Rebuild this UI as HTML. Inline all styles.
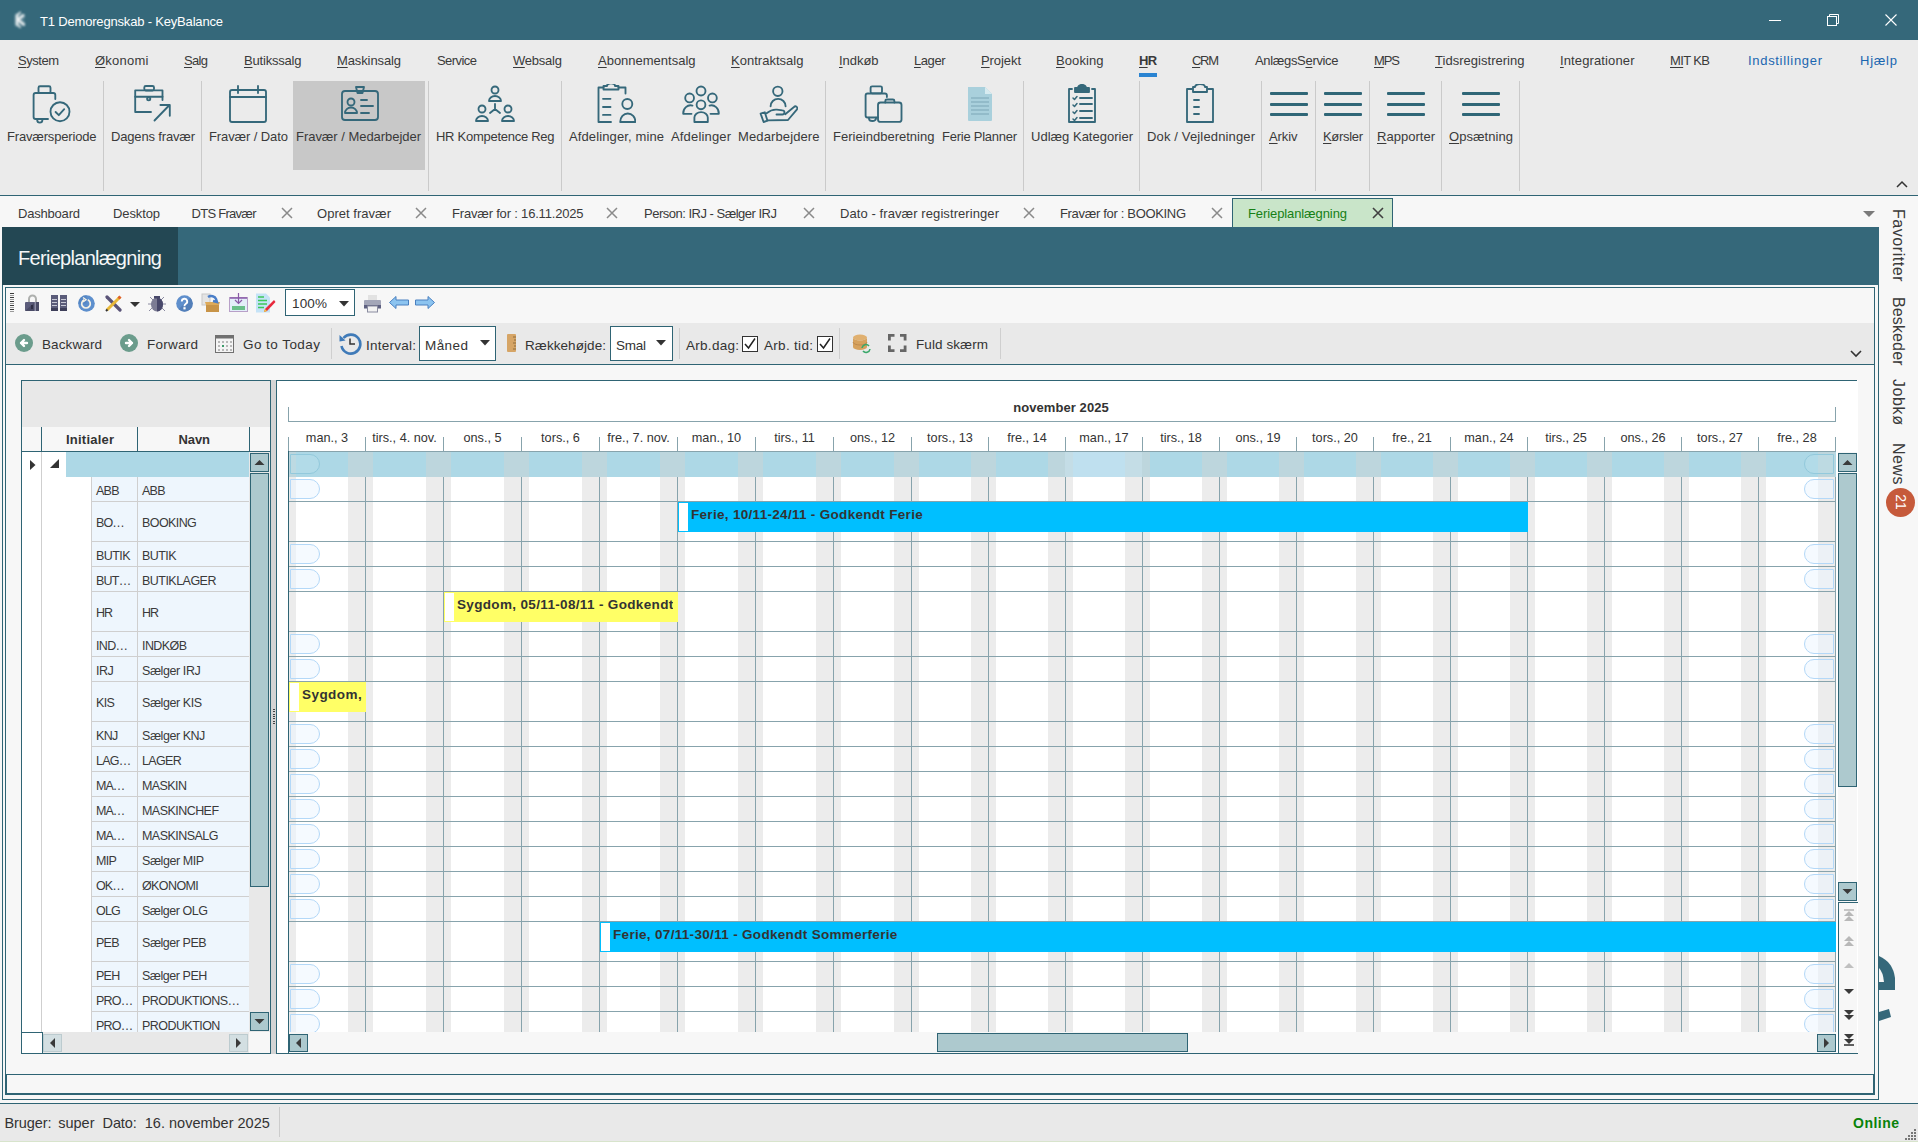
<!DOCTYPE html><html><head><meta charset="utf-8"><style>
html,body{margin:0;padding:0}
body{width:1918px;height:1142px;position:relative;overflow:hidden;background:#f7f7f7;font-family:"Liberation Sans",sans-serif;}
.a{position:absolute}
.t{white-space:nowrap}
u{text-decoration:underline;text-underline-offset:1.5px;text-decoration-thickness:1px}
</style></head><body>
<div class="a" style="left:0px;top:0px;width:1918px;height:40px;background:#35687a;"></div>
<svg class="a" style="left:8px;top:6px;filter:blur(0.8px);" width="24" height="28" viewBox="0 0 24 28"><g fill="none" stroke="#cfdde2" stroke-width="6" opacity="0.25" stroke-linecap="round"><path d="M9.5 10 V18 M10 13.8 L14 11 M10 13.8 L14 17"/></g><g fill="none" stroke="#e9eef0" stroke-width="2.6" stroke-linecap="round" stroke-linejoin="round"><path d="M9 9.5 V18.5"/><path d="M10 13.8 L15.3 9.3 M10 13.8 L15.8 18.6"/><path d="M9 9.2 L12.2 6.3 M9.8 19 L12.2 21.3" stroke-width="1.6"/></g></svg>
<div class="a t" style="left:40.00px;top:15.00px;font-size:13px;line-height:13px;color:#ffffff;letter-spacing:-0.180px;">T1 Demoregnskab - KeyBalance</div>
<div class="a" style="left:1769px;top:20px;width:12px;height:1px;background:#ffffff;"></div>
<svg class="a" style="left:1826px;top:13px;" width="14" height="14" viewBox="0 0 14 14"><g fill="none" stroke="#fff" stroke-width="1"><rect x="1.5" y="3.5" width="9" height="9"/><path d="M3.5 3.5 V1.5 H12.5 V10.5 H10.5"/></g></svg>
<svg class="a" style="left:1884px;top:13px;" width="14" height="14" viewBox="0 0 14 14"><g stroke="#fff" stroke-width="1.1"><path d="M1.5 1.5 L12.5 12.5 M12.5 1.5 L1.5 12.5"/></g></svg>
<div class="a" style="left:0px;top:40px;width:1918px;height:155px;background:#ebebeb;"></div>
<div class="a t" style="left:18.00px;top:54.00px;font-size:13px;line-height:13px;color:#3a3a3a;letter-spacing:-0.468px;"><u>S</u>ystem</div>
<div class="a t" style="left:95.00px;top:54.00px;font-size:13px;line-height:13px;color:#3a3a3a;letter-spacing:0.247px;"><u>Ø</u>konomi</div>
<div class="a t" style="left:184.00px;top:54.00px;font-size:13px;line-height:13px;color:#3a3a3a;letter-spacing:-0.673px;"><u>S</u>alg</div>
<div class="a t" style="left:244.00px;top:54.00px;font-size:13px;line-height:13px;color:#3a3a3a;letter-spacing:-0.194px;"><u>B</u>utikssalg</div>
<div class="a t" style="left:337.00px;top:54.00px;font-size:13px;line-height:13px;color:#3a3a3a;letter-spacing:-0.114px;"><u>M</u>askinsalg</div>
<div class="a t" style="left:437.00px;top:54.00px;font-size:13px;line-height:13px;color:#3a3a3a;letter-spacing:-0.558px;">Service</div>
<div class="a t" style="left:513.00px;top:54.00px;font-size:13px;line-height:13px;color:#3a3a3a;letter-spacing:-0.224px;"><u>W</u>ebsalg</div>
<div class="a t" style="left:598.00px;top:54.00px;font-size:13px;line-height:13px;color:#3a3a3a;letter-spacing:-0.005px;"><u>A</u>bonnementsalg</div>
<div class="a t" style="left:731.00px;top:54.00px;font-size:13px;line-height:13px;color:#3a3a3a;letter-spacing:0.022px;"><u>K</u>ontraktsalg</div>
<div class="a t" style="left:839.00px;top:54.00px;font-size:13px;line-height:13px;color:#3a3a3a;letter-spacing:-0.048px;"><u>I</u>ndkøb</div>
<div class="a t" style="left:914.00px;top:54.00px;font-size:13px;line-height:13px;color:#3a3a3a;letter-spacing:-0.437px;"><u>L</u>ager</div>
<div class="a t" style="left:981.00px;top:54.00px;font-size:13px;line-height:13px;color:#3a3a3a;letter-spacing:-0.077px;"><u>P</u>rojekt</div>
<div class="a t" style="left:1056.00px;top:54.00px;font-size:13px;line-height:13px;color:#3a3a3a;letter-spacing:0.087px;"><u>B</u>ooking</div>
<div class="a t" style="left:1139.00px;top:54.00px;font-size:13px;line-height:13px;color:#3a3a3a;letter-spacing:-0.777px;font-weight:bold;"><u>H</u>R</div>
<div class="a t" style="left:1192.00px;top:54.00px;font-size:13px;line-height:13px;color:#3a3a3a;letter-spacing:-1.303px;"><u>C</u>RM</div>
<div class="a t" style="left:1255.00px;top:54.00px;font-size:13px;line-height:13px;color:#3a3a3a;letter-spacing:-0.327px;">AnlægsS<u>e</u>rvice</div>
<div class="a t" style="left:1374.00px;top:54.00px;font-size:13px;line-height:13px;color:#3a3a3a;letter-spacing:-1.086px;"><u>M</u>PS</div>
<div class="a t" style="left:1435.00px;top:54.00px;font-size:13px;line-height:13px;color:#3a3a3a;letter-spacing:0.027px;"><u>T</u>idsregistrering</div>
<div class="a t" style="left:1560.00px;top:54.00px;font-size:13px;line-height:13px;color:#3a3a3a;letter-spacing:0.126px;"><u>I</u>ntegrationer</div>
<div class="a t" style="left:1670.00px;top:54.00px;font-size:13px;line-height:13px;color:#3a3a3a;letter-spacing:-0.620px;"><u>MI</u>T KB</div>
<div class="a t" style="left:1748.00px;top:54.00px;font-size:13px;line-height:13px;color:#1a66b0;letter-spacing:0.687px;">Indstillinger</div>
<div class="a t" style="left:1860.00px;top:54.00px;font-size:13px;line-height:13px;color:#1a66b0;letter-spacing:0.762px;">Hjælp</div>
<div class="a" style="left:1139px;top:73px;width:18px;height:4px;background:#2a84d2;"></div>
<div class="a" style="left:103px;top:81px;width:1px;height:110px;background:#cacaca;"></div>
<div class="a" style="left:201px;top:81px;width:1px;height:110px;background:#cacaca;"></div>
<div class="a" style="left:428px;top:81px;width:1px;height:110px;background:#cacaca;"></div>
<div class="a" style="left:561px;top:81px;width:1px;height:110px;background:#cacaca;"></div>
<div class="a" style="left:825px;top:81px;width:1px;height:110px;background:#cacaca;"></div>
<div class="a" style="left:1023px;top:81px;width:1px;height:110px;background:#cacaca;"></div>
<div class="a" style="left:1139px;top:81px;width:1px;height:110px;background:#cacaca;"></div>
<div class="a" style="left:1261px;top:81px;width:1px;height:110px;background:#cacaca;"></div>
<div class="a" style="left:1315px;top:81px;width:1px;height:110px;background:#cacaca;"></div>
<div class="a" style="left:1369px;top:81px;width:1px;height:110px;background:#cacaca;"></div>
<div class="a" style="left:1441px;top:81px;width:1px;height:110px;background:#cacaca;"></div>
<div class="a" style="left:1519px;top:81px;width:1px;height:110px;background:#cacaca;"></div>
<div class="a" style="left:293px;top:81px;width:132px;height:89px;background:#c8c8c8;"></div>
<div class="a t" style="left:7.00px;top:130.00px;font-size:13px;line-height:13px;color:#3a3a3a;letter-spacing:-0.173px;">Fraværsperiode</div>
<div class="a t" style="left:111.00px;top:130.00px;font-size:13px;line-height:13px;color:#3a3a3a;letter-spacing:-0.165px;">Dagens fravær</div>
<div class="a t" style="left:209.00px;top:130.00px;font-size:13px;line-height:13px;color:#3a3a3a;letter-spacing:-0.099px;">Fravær / Dato</div>
<div class="a t" style="left:296.00px;top:130.00px;font-size:13px;line-height:13px;color:#3a3a3a;letter-spacing:-0.037px;">Fravær / Medarbejder</div>
<div class="a t" style="left:436.00px;top:130.00px;font-size:13px;line-height:13px;color:#3a3a3a;letter-spacing:-0.271px;">HR Kompetence Reg</div>
<div class="a t" style="left:569.00px;top:130.00px;font-size:13px;line-height:13px;color:#3a3a3a;letter-spacing:0.119px;">Afdelinger, mine</div>
<div class="a t" style="left:671.00px;top:130.00px;font-size:13px;line-height:13px;color:#3a3a3a;letter-spacing:0.163px;">Afdelinger</div>
<div class="a t" style="left:738.00px;top:130.00px;font-size:13px;line-height:13px;color:#3a3a3a;letter-spacing:0.117px;">Medarbejdere</div>
<div class="a t" style="left:833.00px;top:130.00px;font-size:13px;line-height:13px;color:#3a3a3a;letter-spacing:0.021px;">Ferieindberetning</div>
<div class="a t" style="left:942.00px;top:130.00px;font-size:13px;line-height:13px;color:#3a3a3a;letter-spacing:-0.253px;">Ferie Planner</div>
<div class="a t" style="left:1031.00px;top:130.00px;font-size:13px;line-height:13px;color:#3a3a3a;letter-spacing:0.008px;">Udlæg Kategorier</div>
<div class="a t" style="left:1147.00px;top:130.00px;font-size:13px;line-height:13px;color:#3a3a3a;letter-spacing:0.147px;">Dok / Vejledninger</div>
<div class="a t" style="left:1269.00px;top:130.00px;font-size:13px;line-height:13px;color:#3a3a3a;letter-spacing:-0.097px;"><u>A</u>rkiv</div>
<div class="a t" style="left:1323.00px;top:130.00px;font-size:13px;line-height:13px;color:#3a3a3a;letter-spacing:-0.315px;"><u>K</u>ørsler</div>
<div class="a t" style="left:1377.00px;top:130.00px;font-size:13px;line-height:13px;color:#3a3a3a;letter-spacing:0.024px;"><u>R</u>apporter</div>
<div class="a t" style="left:1449.00px;top:130.00px;font-size:13px;line-height:13px;color:#3a3a3a;letter-spacing:0.051px;"><u>O</u>psætning</div>
<svg class="a" style="left:32px;top:84px;" width="40" height="40" viewBox="0 0 40 40"><g fill="none" stroke="#35687a" stroke-width="1.85" stroke-linecap="round" stroke-linejoin="round"><rect x="6.5" y="2.2" width="12" height="6.8" rx="1.5"/><path d="M23.3 15 V11 a2 2 0 0 0 -2 -2 H3.6 a2 2 0 0 0 -2 2 V33 a2 2 0 0 0 2 2 H16"/><path d="M5.2 35 v1 a2.6 2.6 0 0 0 5.2 0 v-1"/><circle cx="28" cy="27.7" r="9.5"/><path d="M23.6 28 l3.2 3.2 l5.4 -6"/></g></svg>
<svg class="a" style="left:133px;top:84px;" width="40" height="40" viewBox="0 0 40 40"><g fill="none" stroke="#35687a" stroke-width="1.85" stroke-linecap="round" stroke-linejoin="round"><rect x="11.3" y="2" width="9.7" height="4.5" rx="1.5"/><path d="M29.5 16 V6.4 H2.2 V28 H18"/><path d="M2.2 12.7 H29.5"/><circle cx="15.7" cy="14.8" r="1.6"/><path d="M21.5 36.5 L36.5 21 M27.4 21 H36.8 V31.8"/></g></svg>
<svg class="a" style="left:228px;top:84px;" width="40" height="40" viewBox="0 0 40 40"><g fill="none" stroke="#35687a" stroke-width="1.85" stroke-linecap="round" stroke-linejoin="round"><rect x="2" y="6" width="36" height="32" rx="2"/><path d="M2 13 H38 M10 2 V9 M30 2 V9"/></g></svg>
<svg class="a" style="left:339px;top:84px;" width="40" height="40" viewBox="0 0 40 40"><g fill="none" stroke="#35687a" stroke-width="1.85" stroke-linecap="round" stroke-linejoin="round"><rect x="3" y="7" width="36" height="29" rx="3"/><path d="M17 3 H25 L23.5 9 H18.5 Z"/><circle cx="12" cy="18" r="3.5"/><path d="M6 29 a6 5.5 0 0 1 12 0 Z"/><path d="M22 16 H28 M22 22 H34 M22 29 H30"/></g></svg>
<svg class="a" style="left:475px;top:84px;" width="40" height="40" viewBox="0 0 40 40"><g fill="none" stroke="#35687a" stroke-width="1.85" stroke-linecap="round" stroke-linejoin="round"><circle cx="20" cy="6" r="3.5"/><path d="M14 17 a6 5 0 0 1 12 0 Z"/><circle cx="7" cy="25" r="3.5"/><path d="M1 37 a6 5 0 0 1 12 0 Z"/><circle cx="33" cy="25" r="3.5"/><path d="M27 37 a6 5 0 0 1 12 0 Z"/><path d="M20 20 V25 L15 29 M20 25 L25 29"/></g></svg>
<svg class="a" style="left:596px;top:84px;" width="40" height="40" viewBox="0 0 40 40"><g fill="none" stroke="#35687a" stroke-width="1.85" stroke-linecap="round" stroke-linejoin="round"><path d="M15 38 H2.5 V3.5 H7.5 M22.5 3.5 H29.5 V9.5"/><path d="M7.5 5.5 V2 H11 a4 2.6 0 0 1 8 0 H22.5 V5.5 Z"/><path d="M7 14.8 H14.5 M7 23 H14.5 M7 30.9 H14.5"/><circle cx="31.3" cy="20" r="5"/><path d="M24.2 38 a7.6 8.5 0 0 1 15.2 0 Z"/></g></svg>
<svg class="a" style="left:681px;top:84px;" width="40" height="40" viewBox="0 0 40 40"><g fill="none" stroke="#35687a" stroke-width="1.85" stroke-linecap="round" stroke-linejoin="round"><circle cx="20" cy="7" r="4.5"/><circle cx="8.6" cy="13.9" r="4.4"/><circle cx="31.4" cy="13.9" r="4.4"/><circle cx="20" cy="20.8" r="4.4"/><path d="M13.4 38 V33.5 a6.7 5.4 0 0 1 13.4 0 V38 Z"/><path d="M11.5 21.6 A7.4 8 0 0 0 2.2 29.8 H10.5 M28.5 21.6 A7.4 8 0 0 1 37.8 29.8 H29.5"/></g></svg>
<svg class="a" style="left:758px;top:84px;" width="40" height="40" viewBox="0 0 40 40"><g fill="none" stroke="#35687a" stroke-width="1.85" stroke-linecap="round" stroke-linejoin="round"><circle cx="19.8" cy="7.3" r="4.7"/><path d="M12.6 22.3 a7.5 7.5 0 0 1 15 0"/><path d="M2.6 29.6 L5.6 38 L9.5 36.7 L6.8 28.3 Z"/><path d="M8.6 29.2 Q13.5 25.2 18.8 25.6 L24.5 26.3 a2.1 2.1 0 0 1 -0.3 4.2 H18.5"/><path d="M9.5 36.4 L30 36 L38.8 25.6 a1.9 1.9 0 0 0 -2.8 -2.6 L27.2 30.2"/></g></svg>
<svg class="a" style="left:864px;top:84px;" width="40" height="40" viewBox="0 0 40 40"><g fill="none" stroke="#35687a" stroke-width="1.85" stroke-linecap="round" stroke-linejoin="round"><rect x="6.6" y="2.3" width="11.4" height="7" rx="1.5"/><path d="M22.9 13 V11.5 a2 2 0 0 0 -2 -2 H3.6 a2 2 0 0 0 -2 2 V31.5 a2 2 0 0 0 2 2 H14"/><path d="M5 33.6 v0.8 a3.5 2.6 0 0 0 7 0 v-0.8"/><rect x="14" y="18.5" width="23.5" height="19.4" rx="2.5"/><path d="M21.3 18.5 V17 a1.5 1.5 0 0 1 1.5 -1.5 H28.9 a1.5 1.5 0 0 1 1.5 1.5 V18.5"/></g></svg>
<svg class="a" style="left:966px;top:86px;" width="28" height="36" viewBox="0 0 28 36"><path d="M2 1 H19 L26 8 V34 a1 1 0 0 1 -1 1 H3 a1 1 0 0 1 -1 -1 Z" fill="#a9d0dc"/><path d="M19 1 V8 H26 Z" fill="#d7ebf0"/><g stroke="#8ab4c2" stroke-width="1.3"><path d="M5 12 H23 M5 16 H23 M5 20 H23 M5 24 H23 M5 28 H23"/></g></svg>
<svg class="a" style="left:1062px;top:84px;" width="40" height="40" viewBox="0 0 40 40"><g fill="none" stroke="#35687a" stroke-width="1.85" stroke-linecap="round" stroke-linejoin="round"><path d="M10 5 H7 V38 H33 V5 H30"/><path d="M13 4 H16 a4 3.2 0 0 1 8 0 H27 V8 H13 Z" fill="#35687a"/><path d="M11 14 l1.5 1.5 l2.5 -3 M11 21 l1.5 1.5 l2.5 -3 M11 28 l1.5 1.5 l2.5 -3 M11 35 l1.5 1.5 l2.5 -3" stroke-width="1.5"/><path d="M18 14 H30 M18 20 H30 M18 27 H30 M18 34 H30"/></g></svg>
<svg class="a" style="left:1181px;top:84px;" width="40" height="40" viewBox="0 0 40 40"><g fill="none" stroke="#35687a" stroke-width="1.85" stroke-linecap="round" stroke-linejoin="round"><path d="M11 5 H6 V38 H32 V5 H27"/><path d="M14 3 a5 3 0 0 1 10 0 H26 V8 H12 V3 Z"/><path d="M13 16 H18 M13 23 H18 M13 30 H18"/></g></svg>
<div class="a" style="left:1270px;top:92px;width:38px;height:3px;background:#2f6677;border-radius:1px;"></div>
<div class="a" style="left:1270px;top:103px;width:38px;height:3px;background:#2f6677;border-radius:1px;"></div>
<div class="a" style="left:1270px;top:113px;width:38px;height:3px;background:#2f6677;border-radius:1px;"></div>
<div class="a" style="left:1324px;top:92px;width:38px;height:3px;background:#2f6677;border-radius:1px;"></div>
<div class="a" style="left:1324px;top:103px;width:38px;height:3px;background:#2f6677;border-radius:1px;"></div>
<div class="a" style="left:1324px;top:113px;width:38px;height:3px;background:#2f6677;border-radius:1px;"></div>
<div class="a" style="left:1387px;top:92px;width:38px;height:3px;background:#2f6677;border-radius:1px;"></div>
<div class="a" style="left:1387px;top:103px;width:38px;height:3px;background:#2f6677;border-radius:1px;"></div>
<div class="a" style="left:1387px;top:113px;width:38px;height:3px;background:#2f6677;border-radius:1px;"></div>
<div class="a" style="left:1462px;top:92px;width:38px;height:3px;background:#2f6677;border-radius:1px;"></div>
<div class="a" style="left:1462px;top:103px;width:38px;height:3px;background:#2f6677;border-radius:1px;"></div>
<div class="a" style="left:1462px;top:113px;width:38px;height:3px;background:#2f6677;border-radius:1px;"></div>
<svg class="a" style="left:1896px;top:180px;" width="12" height="8" viewBox="0 0 12 8"><path d="M1 7 L6 2 L11 7" fill="none" stroke="#333" stroke-width="1.5"/></svg>
<div class="a" style="left:0px;top:195px;width:1918px;height:1px;background:#2f6474;"></div>
<div class="a" style="left:0px;top:196px;width:1918px;height:31px;background:#f7f7f7;"></div>
<div class="a t" style="left:18.00px;top:207.00px;font-size:13px;line-height:13px;color:#3a3a3a;letter-spacing:-0.199px;">Dashboard</div>
<div class="a t" style="left:113.00px;top:207.00px;font-size:13px;line-height:13px;color:#3a3a3a;letter-spacing:-0.115px;">Desktop</div>
<div class="a t" style="left:191.50px;top:207.00px;font-size:13px;line-height:13px;color:#3a3a3a;letter-spacing:-0.722px;">DTS Fravær</div>
<svg class="a" style="left:281px;top:207px;" width="12" height="12" viewBox="0 0 12 12"><path d="M1 1 L11 11 M11 1 L1 11" stroke="#8a8a8a" stroke-width="1.5"/></svg>
<div class="a t" style="left:317.00px;top:207.00px;font-size:13px;line-height:13px;color:#3a3a3a;letter-spacing:0.029px;">Opret fravær</div>
<svg class="a" style="left:415px;top:207px;" width="12" height="12" viewBox="0 0 12 12"><path d="M1 1 L11 11 M11 1 L1 11" stroke="#8a8a8a" stroke-width="1.5"/></svg>
<div class="a t" style="left:452.00px;top:207.00px;font-size:13px;line-height:13px;color:#3a3a3a;letter-spacing:-0.186px;">Fravær for : 16.11.2025</div>
<svg class="a" style="left:606px;top:207px;" width="12" height="12" viewBox="0 0 12 12"><path d="M1 1 L11 11 M11 1 L1 11" stroke="#8a8a8a" stroke-width="1.5"/></svg>
<div class="a t" style="left:644.00px;top:207.00px;font-size:13px;line-height:13px;color:#3a3a3a;letter-spacing:-0.499px;">Person: IRJ - Sælger IRJ</div>
<svg class="a" style="left:803px;top:207px;" width="12" height="12" viewBox="0 0 12 12"><path d="M1 1 L11 11 M11 1 L1 11" stroke="#8a8a8a" stroke-width="1.5"/></svg>
<div class="a t" style="left:840.00px;top:207.00px;font-size:13px;line-height:13px;color:#3a3a3a;letter-spacing:0.083px;">Dato - fravær registreringer</div>
<svg class="a" style="left:1023px;top:207px;" width="12" height="12" viewBox="0 0 12 12"><path d="M1 1 L11 11 M11 1 L1 11" stroke="#8a8a8a" stroke-width="1.5"/></svg>
<div class="a t" style="left:1060.00px;top:207.00px;font-size:13px;line-height:13px;color:#3a3a3a;letter-spacing:-0.325px;">Fravær for : BOOKING</div>
<svg class="a" style="left:1211px;top:207px;" width="12" height="12" viewBox="0 0 12 12"><path d="M1 1 L11 11 M11 1 L1 11" stroke="#8a8a8a" stroke-width="1.5"/></svg>
<div class="a" style="left:1232px;top:198px;width:161px;height:29px;background:#c9e5c9;border:1px solid #2f6474;border-bottom:none;box-sizing:border-box;"></div>
<div class="a t" style="left:1248.00px;top:207.00px;font-size:13px;line-height:13px;color:#168016;letter-spacing:-0.097px;">Ferieplanlægning</div>
<svg class="a" style="left:1372px;top:207px;" width="12" height="12" viewBox="0 0 12 12"><path d="M1 1 L11 11 M11 1 L1 11" stroke="#404040" stroke-width="1.6"/></svg>
<svg class="a" style="left:1862px;top:210px;" width="14" height="8" viewBox="0 0 14 8"><path d="M1 1 L13 1 L7 7 Z" fill="#7a7a7a"/></svg>
<div class="a" style="left:1879px;top:196px;width:39px;height:908px;background:#f7f7f7;"></div>
<div class="a t" style="left:0.0px;top:208.5px;width:77.5px;height:16px;font-size:16px;line-height:16px;color:#3a3a3a;letter-spacing:0.548px;transform-origin:0 0;transform:translate(1905.7px,0) rotate(90deg);white-space:nowrap">Favoritter</div>
<div class="a t" style="left:0.0px;top:297.0px;width:73.5px;height:16px;font-size:16px;line-height:16px;color:#3a3a3a;letter-spacing:0.129px;transform-origin:0 0;transform:translate(1905.7px,0) rotate(90deg);white-space:nowrap">Beskeder</div>
<div class="a t" style="left:0.0px;top:379.0px;width:51.0px;height:16px;font-size:16px;line-height:16px;color:#3a3a3a;letter-spacing:0.607px;transform-origin:0 0;transform:translate(1905.7px,0) rotate(90deg);white-space:nowrap">Jobkø</div>
<div class="a t" style="left:0.0px;top:443.0px;width:46.5px;height:16px;font-size:16px;line-height:16px;color:#3a3a3a;letter-spacing:0.497px;transform-origin:0 0;transform:translate(1905.7px,0) rotate(90deg);white-space:nowrap">News</div>
<div class="a" style="left:1886px;top:488px;width:29px;height:29px;border-radius:50%;background:#c65a3b;"></div>
<div class="a t" style="left:1887px;top:494px;width:28px;height:16px;font-size:14px;line-height:16px;color:#fff;text-align:center;transform:rotate(90deg);">21</div>
<div class="a" style="left:2px;top:227px;width:1877px;height:58px;background:#35687a;"></div>
<div class="a" style="left:2px;top:227px;width:176px;height:58px;background:#234753;"></div>
<div class="a t" style="left:18.00px;top:248.00px;font-size:20px;line-height:20px;color:#f4f7f8;letter-spacing:-0.703px;">Ferieplanlægning</div>
<div class="a" style="left:2px;top:285px;width:1px;height:815px;background:#2f6474;"></div>
<div class="a" style="left:1878px;top:285px;width:1px;height:815px;background:#2f6474;"></div>
<div class="a" style="left:2px;top:1099px;width:1877px;height:1px;background:#2f6474;"></div>
<div class="a" style="left:5px;top:287px;width:1870px;height:1px;background:#2f6474;"></div>
<div class="a" style="left:5px;top:287px;width:1px;height:808px;background:#2f6474;"></div>
<div class="a" style="left:1874px;top:287px;width:1px;height:808px;background:#2f6474;"></div>
<div class="a" style="left:6px;top:323px;width:1868px;height:41px;background:#e9e9e9;"></div>
<div class="a" style="left:6px;top:364px;width:1868px;height:1px;background:#2f6474;"></div>
<div class="a" style="left:10px;top:293px;width:4px;height:1px;background:#3a3a3a;"></div>
<div class="a" style="left:10px;top:295px;width:4px;height:1px;background:#9a9a9a;"></div>
<div class="a" style="left:10px;top:297px;width:4px;height:1px;background:#3a3a3a;"></div>
<div class="a" style="left:10px;top:299px;width:4px;height:1px;background:#9a9a9a;"></div>
<div class="a" style="left:10px;top:301px;width:4px;height:1px;background:#3a3a3a;"></div>
<div class="a" style="left:10px;top:303px;width:4px;height:1px;background:#9a9a9a;"></div>
<div class="a" style="left:10px;top:305px;width:4px;height:1px;background:#3a3a3a;"></div>
<div class="a" style="left:10px;top:307px;width:4px;height:1px;background:#9a9a9a;"></div>
<div class="a" style="left:10px;top:309px;width:4px;height:1px;background:#3a3a3a;"></div>
<div class="a" style="left:10px;top:311px;width:4px;height:1px;background:#9a9a9a;"></div>
<svg class="a" style="left:25px;top:294px;" width="15" height="18" viewBox="0 0 15 18"><path d="M4 8 V5 a3.5 3.5 0 0 1 7 0 V8" fill="none" stroke="#aeb0ae" stroke-width="2"/><rect x="0" y="8" width="14" height="9" rx="1" fill="#5b5c7a"/><path d="M0 17 L10 8 H14 V17 Z" fill="#4a4b66"/><rect x="6" y="11" width="2" height="4" fill="#2e2e44"/><rect x="9.5" y="8" width="1.5" height="9" fill="#8d8ea6"/></svg>
<svg class="a" style="left:51px;top:295px;" width="17" height="16" viewBox="0 0 17 16"><rect x="0" y="0" width="7" height="16" fill="#5b5c7a"/><rect x="9" y="0" width="7" height="16" fill="#5b5c7a"/><g stroke="#c9cad6" stroke-width="1"><path d="M1 4.5 H6 M1 7.5 H6 M1 10.5 H6 M10 4.5 H15 M10 7.5 H15 M10 10.5 H15"/></g><rect x="0" y="13" width="7" height="3" fill="#3e3f5a"/><rect x="9" y="13" width="7" height="3" fill="#3e3f5a"/></svg>
<svg class="a" style="left:78px;top:295px;" width="17" height="17" viewBox="0 0 17 17"><circle cx="8.5" cy="8.5" r="8.3" fill="#5d8fcd"/><path d="M0 8.5 a8.5 8.5 0 0 1 8.5 -8.5 V8.5 Z" fill="#4d7fbd" opacity="0.6"/><path d="M6.2 4.8 a4.3 4.3 0 1 0 3.6 0" fill="none" stroke="#f4f1e6" stroke-width="1.7"/><path d="M5 2.5 L8 4.8 L5 7" fill="none" stroke="#f4f1e6" stroke-width="1.4"/></svg>
<svg class="a" style="left:105px;top:295px;" width="17" height="17" viewBox="0 0 17 17"><path d="M2 2 L15 15" stroke="#5a5478" stroke-width="3.2" stroke-linecap="round"/><path d="M15 2 L2 15" stroke="#e8b83a" stroke-width="3" /><path d="M15.5 1.5 L13.5 3.5" stroke="#e0602a" stroke-width="3"/><path d="M2.5 14.5 L1 16" stroke="#333" stroke-width="2"/></svg>
<svg class="a" style="left:130px;top:302px;" width="10" height="5" viewBox="0 0 10 5"><path d="M0 0 H10 L5 5 Z" fill="#333"/></svg>
<svg class="a" style="left:147px;top:295px;" width="20" height="17" viewBox="0 0 20 17"><g stroke="#8a8aa0" stroke-width="1"><path d="M3 2 L6 5 M17 2 L14 5 M1 9 H5 M19 9 H15 M2 16 L5 13 M18 16 L15 13"/></g><ellipse cx="10" cy="9.5" rx="6" ry="7" fill="#7c7c94"/><path d="M10 2.5 a6 7 0 0 1 0 14 Z" fill="#48486a"/><rect x="7" y="1" width="6" height="2.5" fill="#48486a"/></svg>
<svg class="a" style="left:176px;top:295px;" width="17" height="17" viewBox="0 0 17 17"><circle cx="8.5" cy="8.5" r="8.3" fill="#5f8fcc"/><path d="M14.37 2.63 A8.3 8.3 0 0 1 2.63 14.37 Z" fill="#4f78b0" opacity="0.7"/><path d="M5.8 6.5 a2.7 2.7 0 1 1 3.7 2.5 c-1 .5 -1 1 -1 2.2" fill="none" stroke="#fff" stroke-width="1.9"/><rect x="7.4" y="12.2" width="2.2" height="2.2" fill="#fff"/></svg>
<svg class="a" style="left:201px;top:293px;" width="20" height="20" viewBox="0 0 20 20"><rect x="1" y="1" width="8" height="11" fill="#e4e4e4" stroke="#c8c8c8"/><rect x="5" y="11" width="13" height="8" fill="#c89448"/><path d="M4 9 H19 L18 12 H5 Z" fill="#ddaa5a"/><path d="M7 4 a5 4 0 0 1 8 2 L16 9 L12 8" fill="none" stroke="#4a7ec8" stroke-width="2.4"/></svg>
<svg class="a" style="left:229px;top:293px;" width="19" height="19" viewBox="0 0 19 19"><rect x="0.5" y="4.5" width="18" height="14" fill="#e3eef9" stroke="#b8a0c8"/><path d="M1 5 H18" stroke="#8a5aa8" stroke-width="1.5"/><rect x="3" y="13" width="13" height="4" fill="#6abf8a"/><path d="M9.5 0 V10 M6 7 L9.5 10.5 L13 7" fill="none" stroke="#8a5aa8" stroke-width="1.2"/></svg>
<svg class="a" style="left:255px;top:293px;" width="21" height="20" viewBox="0 0 21 20"><path d="M1 0.5 H11 L15 4.5 V19.5 H1 Z" fill="#c5e3f7"/><g stroke="#3cc85a" stroke-width="1.6"><path d="M3 4 H9 M3 7.5 H12 M3 11 H12 M3 14.5 H9"/></g><path d="M19 7 L10 16 L9 19 L12 18 L20.5 9 Z" fill="#e8283c"/><path d="M9 19 L10 16 L12 18 Z" fill="#f0d040"/></svg>
<div class="a" style="left:285px;top:289px;width:70px;height:27px;background:#ffffff;border:1px solid #2f6474;box-sizing:border-box;"></div>
<div class="a t" style="left:292.00px;top:297.00px;font-size:13.5px;line-height:13.5px;color:#333;letter-spacing:0.158px;">100%</div>
<svg class="a" style="left:339px;top:301px;" width="10" height="6" viewBox="0 0 10 6"><path d="M0 0 H10 L5 5.5 Z" fill="#333"/></svg>
<svg class="a" style="left:364px;top:294px;" width="17" height="19" viewBox="0 0 17 19"><path d="M4 1 H13 V6 H4 Z" fill="#e2e2e2"/><path d="M0 7 a1 1 0 0 1 1 -1 H16 a1 1 0 0 1 1 1 V14 H0 Z" fill="#a3a6b8"/><rect x="0" y="11" width="17" height="3.5" fill="#5d6080"/><rect x="3.5" y="12" width="10" height="6" fill="#f2f2f2" stroke="#8a8ca0"/></svg>
<svg class="a" style="left:389px;top:296px;" width="20" height="13" viewBox="0 0 20 13"><path d="M0.5 6.5 L7 0.5 V4 H19.5 V9 H7 V12.5 Z" fill="#8cc4f0" stroke="#4a80c0" stroke-width="1"/></svg>
<svg class="a" style="left:415px;top:296px;" width="20" height="13" viewBox="0 0 20 13"><path d="M19.5 6.5 L13 0.5 V4 H0.5 V9 H13 V12.5 Z" fill="#8cc4f0" stroke="#4a80c0" stroke-width="1"/></svg>
<svg class="a" style="left:15px;top:334px;" width="18" height="18" viewBox="0 0 18 18"><circle cx="9" cy="9" r="9" fill="#6b9c8c"/><path d="M12 9 H6 M9 6 L6 9 L9 12" fill="none" stroke="#fff" stroke-width="2.4" stroke-linecap="round" stroke-linejoin="round"/></svg>
<div class="a t" style="left:42.00px;top:338.00px;font-size:13.5px;line-height:13.5px;color:#333;letter-spacing:0.104px;">Backward</div>
<svg class="a" style="left:120px;top:334px;" width="18" height="18" viewBox="0 0 18 18"><circle cx="9" cy="9" r="9" fill="#6b9c8c"/><path d="M6 9 H12 M9 6 L12 9 L9 12" fill="none" stroke="#fff" stroke-width="2.4" stroke-linecap="round" stroke-linejoin="round"/></svg>
<div class="a t" style="left:147.00px;top:338.00px;font-size:13.5px;line-height:13.5px;color:#333;letter-spacing:0.248px;">Forward</div>
<svg class="a" style="left:215px;top:335px;" width="19" height="18" viewBox="0 0 19 18"><rect x="0.5" y="0.5" width="18" height="17" fill="#f4f4f4" stroke="#707070"/><rect x="0.5" y="0.5" width="18" height="3" fill="#707070"/><g fill="#b8b8b8"><rect x="3" y="6" width="2" height="2"/><rect x="7" y="6" width="2" height="2"/><rect x="11" y="6" width="2" height="2"/><rect x="15" y="6" width="2" height="2"/><rect x="3" y="10" width="2" height="2"/><rect x="11" y="10" width="2" height="2"/><rect x="15" y="10" width="2" height="2"/><rect x="3" y="14" width="2" height="2"/><rect x="7" y="14" width="2" height="2"/><rect x="11" y="14" width="2" height="2"/><rect x="15" y="14" width="2" height="2"/></g><rect x="7" y="10" width="2" height="2" fill="#3a9a6a"/></svg>
<div class="a t" style="left:243.00px;top:338.00px;font-size:13.5px;line-height:13.5px;color:#333;letter-spacing:0.445px;">Go to Today</div>
<div class="a" style="left:331px;top:328px;width:1px;height:31px;background:#cfcfcf;"></div>
<svg class="a" style="left:339px;top:332px;" width="23" height="23" viewBox="0 0 23 23"><path d="M4.5 6 A9.5 9.5 0 1 1 2.5 14" fill="none" stroke="#3f7ab8" stroke-width="2.6"/><path d="M0.5 3 L6.5 8.5 L0.5 9.5 Z" fill="#3f7ab8"/><path d="M11 6.5 V12 H16" fill="none" stroke="#333" stroke-width="1.5"/></svg>
<div class="a t" style="left:366.00px;top:339.00px;font-size:13.5px;line-height:13.5px;color:#333;letter-spacing:0.247px;">Interval:</div>
<div class="a" style="left:419px;top:326px;width:77px;height:35px;background:#ffffff;border:1px solid #2f6474;box-sizing:border-box;"></div>
<div class="a t" style="left:425.00px;top:339.00px;font-size:13.5px;line-height:13.5px;color:#333;letter-spacing:0.431px;">Måned</div>
<svg class="a" style="left:480px;top:340px;" width="10" height="6" viewBox="0 0 10 6"><path d="M0 0 H10 L5 5.5 Z" fill="#333"/></svg>
<svg class="a" style="left:507px;top:334px;" width="10" height="19" viewBox="0 0 10 19"><rect x="0" y="0" width="9" height="18" rx="1" fill="#d6a566"/><g stroke="#8d6a3a" stroke-width="1"><path d="M6 3 H9 M7 6 H9 M6 9 H9 M7 12 H9 M6 15 H9"/></g></svg>
<div class="a t" style="left:525.00px;top:339.00px;font-size:13.5px;line-height:13.5px;color:#333;letter-spacing:0.072px;">Rækkehøjde:</div>
<div class="a" style="left:610px;top:326px;width:63px;height:35px;background:#ffffff;border:1px solid #2f6474;box-sizing:border-box;"></div>
<div class="a t" style="left:616.00px;top:339.00px;font-size:13.5px;line-height:13.5px;color:#333;letter-spacing:-0.252px;">Smal</div>
<svg class="a" style="left:656px;top:340px;" width="10" height="6" viewBox="0 0 10 6"><path d="M0 0 H10 L5 5.5 Z" fill="#333"/></svg>
<div class="a" style="left:679px;top:328px;width:1px;height:31px;background:#cfcfcf;"></div>
<div class="a t" style="left:686.00px;top:339.00px;font-size:13.5px;line-height:13.5px;color:#333;letter-spacing:0.281px;">Arb.dag:</div>
<svg class="a" style="left:742px;top:336px;" width="16" height="16" viewBox="0 0 16 16"><rect x="0.5" y="0.5" width="15" height="15" fill="#fff" stroke="#333"/><path d="M3 8 L6.5 12 L13 2.5" fill="none" stroke="#222" stroke-width="1.5"/></svg>
<div class="a t" style="left:764.00px;top:339.00px;font-size:13.5px;line-height:13.5px;color:#333;letter-spacing:0.310px;">Arb. tid:</div>
<svg class="a" style="left:817px;top:336px;" width="16" height="16" viewBox="0 0 16 16"><rect x="0.5" y="0.5" width="15" height="15" fill="#fff" stroke="#333"/><path d="M3 8 L6.5 12 L13 2.5" fill="none" stroke="#222" stroke-width="1.5"/></svg>
<div class="a" style="left:839px;top:328px;width:1px;height:31px;background:#cfcfcf;"></div>
<svg class="a" style="left:852px;top:334px;" width="20" height="20" viewBox="0 0 20 20"><ellipse cx="8" cy="3.5" rx="7" ry="3" fill="#e0b070"/><path d="M1 3.5 V13 a7 3 0 0 0 14 0 V3.5 a7 3 0 0 1 -14 0" fill="#d6a25e"/><path d="M1 8 a7 3 0 0 0 14 0" fill="none" stroke="#b8844a" stroke-width="0.8"/><path d="M10 14 a4 4 0 0 1 7 -2 M18 15 a4 4 0 0 1 -7 2" fill="none" stroke="#3aa86a" stroke-width="1.6"/></svg>
<svg class="a" style="left:888px;top:334px;" width="19" height="18" viewBox="0 0 19 18"><g fill="none" stroke="#666" stroke-width="2.8"><path d="M1.4 6.5 V1.4 H6.5 M12 1.4 H17.1 V6.5 M17.1 11.5 V16.6 H12 M6.5 16.6 H1.4 V11.5"/></g></svg>
<div class="a t" style="left:916.00px;top:338.00px;font-size:13.5px;line-height:13.5px;color:#333;letter-spacing:0.083px;">Fuld skærm</div>
<div class="a" style="left:1000px;top:328px;width:1px;height:31px;background:#cfcfcf;"></div>
<svg class="a" style="left:1850px;top:350px;" width="12" height="8" viewBox="0 0 12 8"><path d="M1 1 L6 6 L11 1" fill="none" stroke="#333" stroke-width="1.6"/></svg>
<div class="a" style="left:6px;top:1074px;width:1868px;height:1px;background:#2f6474;"></div>
<div class="a" style="left:5px;top:1093px;width:1870px;height:2px;background:#2f6474;"></div>
<div class="a" style="left:1873px;top:1074px;width:2px;height:21px;background:#2f6474;"></div>
<div class="a" style="left:5px;top:1074px;width:2px;height:21px;background:#2f6474;"></div>
<svg class="a" style="left:1879px;top:950px;" width="20" height="75" viewBox="0 0 20 75"><path d="M0 6 Q14 12 16 28 L16 40 L0 40 Z" fill="#35687a"/><path d="M0 18 Q4 22 5 32 L0 32 Z" fill="#f7f7f7"/><path d="M0 62 L10 59 L12 67 L0 71 Z" fill="#35687a"/></svg>
<div class="a" style="left:0px;top:1103px;width:1918px;height:1px;background:#2f6474;"></div>
<div class="a" style="left:0px;top:1104px;width:1918px;height:37px;background:#e9e9e9;"></div>
<div class="a" style="left:0px;top:1141px;width:1918px;height:1px;background:#d8e4cc;"></div>
<div class="a t" style="left:4.50px;top:1116.00px;font-size:14.5px;line-height:14.5px;color:#333;letter-spacing:-0.092px;">Bruger:</div>
<div class="a t" style="left:58.20px;top:1116.00px;font-size:14.5px;line-height:14.5px;color:#333;letter-spacing:0.007px;">super</div>
<div class="a t" style="left:102.50px;top:1116.00px;font-size:14.5px;line-height:14.5px;color:#333;letter-spacing:-0.089px;">Dato:</div>
<div class="a t" style="left:144.80px;top:1116.00px;font-size:14.5px;line-height:14.5px;color:#333;letter-spacing:0.003px;">16. november 2025</div>
<div class="a" style="left:279px;top:1107px;width:1px;height:30px;background:#cccccc;"></div>
<div class="a t" style="left:1853.00px;top:1116.00px;font-size:14px;line-height:14px;color:#0a820a;letter-spacing:0.488px;font-weight:bold;">Online</div>
<div class="a" style="left:1914px;top:1129px;width:1.5px;height:1.5px;background:#777;"></div>
<div class="a" style="left:1911px;top:1132px;width:1.5px;height:1.5px;background:#777;"></div>
<div class="a" style="left:1914px;top:1132px;width:1.5px;height:1.5px;background:#777;"></div>
<div class="a" style="left:1908px;top:1135px;width:1.5px;height:1.5px;background:#777;"></div>
<div class="a" style="left:1911px;top:1135px;width:1.5px;height:1.5px;background:#777;"></div>
<div class="a" style="left:1914px;top:1135px;width:1.5px;height:1.5px;background:#777;"></div>
<div class="a" style="left:1905px;top:1138px;width:1.5px;height:1.5px;background:#777;"></div>
<div class="a" style="left:1908px;top:1138px;width:1.5px;height:1.5px;background:#777;"></div>
<div class="a" style="left:1911px;top:1138px;width:1.5px;height:1.5px;background:#777;"></div>
<div class="a" style="left:1914px;top:1138px;width:1.5px;height:1.5px;background:#777;"></div>
<div class="a" style="left:21px;top:380px;width:250px;height:674px;background:#ffffff;border:1px solid #2f6474;box-sizing:border-box;"></div>
<div class="a" style="left:22px;top:381px;width:248px;height:46px;background:#e8e8e8;"></div>
<div class="a" style="left:22px;top:427px;width:248px;height:24px;background:#f7f7f7;"></div>
<div class="a" style="left:41px;top:427px;width:1px;height:24px;background:#2f6474;"></div>
<div class="a" style="left:137px;top:427px;width:1px;height:24px;background:#2f6474;"></div>
<div class="a" style="left:249px;top:427px;width:1px;height:24px;background:#2f6474;"></div>
<div class="a" style="left:22px;top:451px;width:248px;height:1px;background:#2f6474;"></div>
<div class="a t" style="left:66.00px;top:433.00px;font-size:13px;line-height:13px;color:#333;letter-spacing:0.221px;font-weight:bold;">Initialer</div>
<div class="a t" style="left:178.50px;top:433.00px;font-size:13px;line-height:13px;color:#333;letter-spacing:-0.096px;font-weight:bold;">Navn</div>
<div class="a" style="left:22px;top:452px;width:227px;height:580px;overflow:hidden;background:#fff">
<div class="a" style="left:19px;top:0;width:1px;height:580px;background:#cfcfcf"></div>
<div class="a" style="left:44px;top:0;width:183px;height:25px;background:#add8e6"></div>
<svg class="a" style="left:8px;top:8px" width="6" height="10" viewBox="0 0 6 10"><path d="M0 0 L5.5 5 L0 10 Z" fill="#333"/></svg>
<svg class="a" style="left:28px;top:7px" width="9" height="9" viewBox="0 0 9 9"><path d="M9 0 V9 H0 Z" fill="#333"/></svg>
<div class="a" style="left:69px;top:25px;width:158px;height:25px;background:#eef6fd;border-bottom:1px solid #cfcfcf;border-left:1px solid #cfcfcf;box-sizing:border-box"></div>
<div class="a" style="left:115px;top:25px;width:1px;height:25px;background:#cfcfcf"></div>
<div class="a" style="left:69px;top:50px;width:158px;height:40px;background:#eef6fd;border-bottom:1px solid #cfcfcf;border-left:1px solid #cfcfcf;box-sizing:border-box"></div>
<div class="a" style="left:115px;top:50px;width:1px;height:40px;background:#cfcfcf"></div>
<div class="a" style="left:69px;top:90px;width:158px;height:25px;background:#eef6fd;border-bottom:1px solid #cfcfcf;border-left:1px solid #cfcfcf;box-sizing:border-box"></div>
<div class="a" style="left:115px;top:90px;width:1px;height:25px;background:#cfcfcf"></div>
<div class="a" style="left:69px;top:115px;width:158px;height:25px;background:#eef6fd;border-bottom:1px solid #cfcfcf;border-left:1px solid #cfcfcf;box-sizing:border-box"></div>
<div class="a" style="left:115px;top:115px;width:1px;height:25px;background:#cfcfcf"></div>
<div class="a" style="left:69px;top:140px;width:158px;height:40px;background:#eef6fd;border-bottom:1px solid #cfcfcf;border-left:1px solid #cfcfcf;box-sizing:border-box"></div>
<div class="a" style="left:115px;top:140px;width:1px;height:40px;background:#cfcfcf"></div>
<div class="a" style="left:69px;top:180px;width:158px;height:25px;background:#eef6fd;border-bottom:1px solid #cfcfcf;border-left:1px solid #cfcfcf;box-sizing:border-box"></div>
<div class="a" style="left:115px;top:180px;width:1px;height:25px;background:#cfcfcf"></div>
<div class="a" style="left:69px;top:205px;width:158px;height:25px;background:#eef6fd;border-bottom:1px solid #cfcfcf;border-left:1px solid #cfcfcf;box-sizing:border-box"></div>
<div class="a" style="left:115px;top:205px;width:1px;height:25px;background:#cfcfcf"></div>
<div class="a" style="left:69px;top:230px;width:158px;height:40px;background:#eef6fd;border-bottom:1px solid #cfcfcf;border-left:1px solid #cfcfcf;box-sizing:border-box"></div>
<div class="a" style="left:115px;top:230px;width:1px;height:40px;background:#cfcfcf"></div>
<div class="a" style="left:69px;top:270px;width:158px;height:25px;background:#eef6fd;border-bottom:1px solid #cfcfcf;border-left:1px solid #cfcfcf;box-sizing:border-box"></div>
<div class="a" style="left:115px;top:270px;width:1px;height:25px;background:#cfcfcf"></div>
<div class="a" style="left:69px;top:295px;width:158px;height:25px;background:#eef6fd;border-bottom:1px solid #cfcfcf;border-left:1px solid #cfcfcf;box-sizing:border-box"></div>
<div class="a" style="left:115px;top:295px;width:1px;height:25px;background:#cfcfcf"></div>
<div class="a" style="left:69px;top:320px;width:158px;height:25px;background:#eef6fd;border-bottom:1px solid #cfcfcf;border-left:1px solid #cfcfcf;box-sizing:border-box"></div>
<div class="a" style="left:115px;top:320px;width:1px;height:25px;background:#cfcfcf"></div>
<div class="a" style="left:69px;top:345px;width:158px;height:25px;background:#eef6fd;border-bottom:1px solid #cfcfcf;border-left:1px solid #cfcfcf;box-sizing:border-box"></div>
<div class="a" style="left:115px;top:345px;width:1px;height:25px;background:#cfcfcf"></div>
<div class="a" style="left:69px;top:370px;width:158px;height:25px;background:#eef6fd;border-bottom:1px solid #cfcfcf;border-left:1px solid #cfcfcf;box-sizing:border-box"></div>
<div class="a" style="left:115px;top:370px;width:1px;height:25px;background:#cfcfcf"></div>
<div class="a" style="left:69px;top:395px;width:158px;height:25px;background:#eef6fd;border-bottom:1px solid #cfcfcf;border-left:1px solid #cfcfcf;box-sizing:border-box"></div>
<div class="a" style="left:115px;top:395px;width:1px;height:25px;background:#cfcfcf"></div>
<div class="a" style="left:69px;top:420px;width:158px;height:25px;background:#eef6fd;border-bottom:1px solid #cfcfcf;border-left:1px solid #cfcfcf;box-sizing:border-box"></div>
<div class="a" style="left:115px;top:420px;width:1px;height:25px;background:#cfcfcf"></div>
<div class="a" style="left:69px;top:445px;width:158px;height:25px;background:#eef6fd;border-bottom:1px solid #cfcfcf;border-left:1px solid #cfcfcf;box-sizing:border-box"></div>
<div class="a" style="left:115px;top:445px;width:1px;height:25px;background:#cfcfcf"></div>
<div class="a" style="left:69px;top:470px;width:158px;height:40px;background:#eef6fd;border-bottom:1px solid #cfcfcf;border-left:1px solid #cfcfcf;box-sizing:border-box"></div>
<div class="a" style="left:115px;top:470px;width:1px;height:40px;background:#cfcfcf"></div>
<div class="a" style="left:69px;top:510px;width:158px;height:25px;background:#eef6fd;border-bottom:1px solid #cfcfcf;border-left:1px solid #cfcfcf;box-sizing:border-box"></div>
<div class="a" style="left:115px;top:510px;width:1px;height:25px;background:#cfcfcf"></div>
<div class="a" style="left:69px;top:535px;width:158px;height:25px;background:#eef6fd;border-bottom:1px solid #cfcfcf;border-left:1px solid #cfcfcf;box-sizing:border-box"></div>
<div class="a" style="left:115px;top:535px;width:1px;height:25px;background:#cfcfcf"></div>
<div class="a" style="left:69px;top:560px;width:158px;height:25px;background:#eef6fd;border-bottom:1px solid #cfcfcf;border-left:1px solid #cfcfcf;box-sizing:border-box"></div>
<div class="a" style="left:115px;top:560px;width:1px;height:25px;background:#cfcfcf"></div>
<div class="a t" style="left:74.00px;top:33.00px;font-size:12.5px;line-height:12.5px;color:#3a3a3a;letter-spacing:-0.750px;">ABB</div>
<div class="a t" style="left:120.00px;top:33.00px;font-size:12.5px;line-height:12.5px;color:#3a3a3a;letter-spacing:-0.750px;">ABB</div>
<div class="a t" style="left:74.00px;top:65.00px;font-size:12.5px;line-height:12.5px;color:#3a3a3a;letter-spacing:-0.917px;">BO…</div>
<div class="a t" style="left:120.00px;top:65.00px;font-size:12.5px;line-height:12.5px;color:#3a3a3a;letter-spacing:-0.583px;">BOOKING</div>
<div class="a t" style="left:74.00px;top:98.00px;font-size:12.5px;line-height:12.5px;color:#3a3a3a;letter-spacing:-0.552px;">BUTIK</div>
<div class="a t" style="left:120.00px;top:98.00px;font-size:12.5px;line-height:12.5px;color:#3a3a3a;letter-spacing:-0.552px;">BUTIK</div>
<div class="a t" style="left:74.00px;top:123.00px;font-size:12.5px;line-height:12.5px;color:#3a3a3a;letter-spacing:-0.750px;">BUT…</div>
<div class="a t" style="left:120.00px;top:123.00px;font-size:12.5px;line-height:12.5px;color:#3a3a3a;letter-spacing:-0.528px;">BUTIKLAGER</div>
<div class="a t" style="left:74.00px;top:155.00px;font-size:12.5px;line-height:12.5px;color:#3a3a3a;letter-spacing:-1.083px;">HR</div>
<div class="a t" style="left:120.00px;top:155.00px;font-size:12.5px;line-height:12.5px;color:#3a3a3a;letter-spacing:-1.083px;">HR</div>
<div class="a t" style="left:74.00px;top:188.00px;font-size:12.5px;line-height:12.5px;color:#3a3a3a;letter-spacing:-0.681px;">IND…</div>
<div class="a t" style="left:120.00px;top:188.00px;font-size:12.5px;line-height:12.5px;color:#3a3a3a;letter-spacing:-0.575px;">INDKØB</div>
<div class="a t" style="left:74.00px;top:213.00px;font-size:12.5px;line-height:12.5px;color:#3a3a3a;letter-spacing:-0.562px;">IRJ</div>
<div class="a t" style="left:120.00px;top:213.00px;font-size:12.5px;line-height:12.5px;color:#3a3a3a;letter-spacing:-0.417px;">Sælger IRJ</div>
<div class="a t" style="left:74.00px;top:245.00px;font-size:12.5px;line-height:12.5px;color:#3a3a3a;letter-spacing:-0.604px;">KIS</div>
<div class="a t" style="left:120.00px;top:245.00px;font-size:12.5px;line-height:12.5px;color:#3a3a3a;letter-spacing:-0.426px;">Sælger KIS</div>
<div class="a t" style="left:74.00px;top:278.00px;font-size:12.5px;line-height:12.5px;color:#3a3a3a;letter-spacing:-0.708px;">KNJ</div>
<div class="a t" style="left:120.00px;top:278.00px;font-size:12.5px;line-height:12.5px;color:#3a3a3a;letter-spacing:-0.449px;">Sælger KNJ</div>
<div class="a t" style="left:74.00px;top:303.00px;font-size:12.5px;line-height:12.5px;color:#3a3a3a;letter-spacing:-0.750px;">LAG…</div>
<div class="a t" style="left:120.00px;top:303.00px;font-size:12.5px;line-height:12.5px;color:#3a3a3a;letter-spacing:-0.636px;">LAGER</div>
<div class="a t" style="left:74.00px;top:328.00px;font-size:12.5px;line-height:12.5px;color:#3a3a3a;letter-spacing:-0.938px;">MA…</div>
<div class="a t" style="left:120.00px;top:328.00px;font-size:12.5px;line-height:12.5px;color:#3a3a3a;letter-spacing:-0.575px;">MASKIN</div>
<div class="a t" style="left:74.00px;top:353.00px;font-size:12.5px;line-height:12.5px;color:#3a3a3a;letter-spacing:-0.938px;">MA…</div>
<div class="a t" style="left:120.00px;top:353.00px;font-size:12.5px;line-height:12.5px;color:#3a3a3a;letter-spacing:-0.546px;">MASKINCHEF</div>
<div class="a t" style="left:74.00px;top:378.00px;font-size:12.5px;line-height:12.5px;color:#3a3a3a;letter-spacing:-0.938px;">MA…</div>
<div class="a t" style="left:120.00px;top:378.00px;font-size:12.5px;line-height:12.5px;color:#3a3a3a;letter-spacing:-0.542px;">MASKINSALG</div>
<div class="a t" style="left:74.00px;top:403.00px;font-size:12.5px;line-height:12.5px;color:#3a3a3a;letter-spacing:-0.667px;">MIP</div>
<div class="a t" style="left:120.00px;top:403.00px;font-size:12.5px;line-height:12.5px;color:#3a3a3a;letter-spacing:-0.440px;">Sælger MIP</div>
<div class="a t" style="left:74.00px;top:428.00px;font-size:12.5px;line-height:12.5px;color:#3a3a3a;letter-spacing:-0.917px;">OK…</div>
<div class="a t" style="left:120.00px;top:428.00px;font-size:12.5px;line-height:12.5px;color:#3a3a3a;letter-spacing:-0.604px;">ØKONOMI</div>
<div class="a t" style="left:74.00px;top:453.00px;font-size:12.5px;line-height:12.5px;color:#3a3a3a;letter-spacing:-0.792px;">OLG</div>
<div class="a t" style="left:120.00px;top:453.00px;font-size:12.5px;line-height:12.5px;color:#3a3a3a;letter-spacing:-0.468px;">Sælger OLG</div>
<div class="a t" style="left:74.00px;top:485.00px;font-size:12.5px;line-height:12.5px;color:#3a3a3a;letter-spacing:-0.750px;">PEB</div>
<div class="a t" style="left:120.00px;top:485.00px;font-size:12.5px;line-height:12.5px;color:#3a3a3a;letter-spacing:-0.459px;">Sælger PEB</div>
<div class="a t" style="left:74.00px;top:518.00px;font-size:12.5px;line-height:12.5px;color:#3a3a3a;letter-spacing:-0.771px;">PEH</div>
<div class="a t" style="left:120.00px;top:518.00px;font-size:12.5px;line-height:12.5px;color:#3a3a3a;letter-spacing:-0.463px;">Sælger PEH</div>
<div class="a t" style="left:74.00px;top:543.00px;font-size:12.5px;line-height:12.5px;color:#3a3a3a;letter-spacing:-0.792px;">PRO…</div>
<div class="a t" style="left:120.00px;top:543.00px;font-size:12.5px;line-height:12.5px;color:#3a3a3a;letter-spacing:-0.568px;">PRODUKTIONS…</div>
<div class="a t" style="left:74.00px;top:568.00px;font-size:12.5px;line-height:12.5px;color:#3a3a3a;letter-spacing:-0.792px;">PRO…</div>
<div class="a t" style="left:120.00px;top:568.00px;font-size:12.5px;line-height:12.5px;color:#3a3a3a;letter-spacing:-0.556px;">PRODUKTION</div>
</div>
<div class="a" style="left:249px;top:452px;width:21px;height:580px;background:#e8e8e8;"></div>
<div class="a" style="left:250px;top:453px;width:19px;height:19px;background:#adc9ce;border:1px solid #2f6474;box-sizing:border-box;"></div>
<svg class="a" style="left:0;top:0;pointer-events:none" width="1918" height="1142"><path d="M254.5 465.0 L264.5 465.0 L259.5 460.0 Z" fill="#3a3a3a"/></svg>
<div class="a" style="left:250px;top:473px;width:19px;height:414px;background:#adc9ce;border:1px solid #2f6474;box-sizing:border-box;"></div>
<div class="a" style="left:250px;top:1012px;width:19px;height:19px;background:#adc9ce;border:1px solid #2f6474;box-sizing:border-box;"></div>
<svg class="a" style="left:0;top:0;pointer-events:none" width="1918" height="1142"><path d="M254.5 1019.0 L264.5 1019.0 L259.5 1024.0 Z" fill="#3a3a3a"/></svg>
<div class="a" style="left:22px;top:1032px;width:20px;height:21px;background:#ffffff;"></div>
<div class="a" style="left:21px;top:1032px;width:21px;height:1px;background:#2f6474;"></div>
<div class="a" style="left:42px;top:1032px;width:1px;height:21px;background:#2f6474;"></div>
<div class="a" style="left:43px;top:1032px;width:206px;height:21px;background:#e8e8e8;"></div>
<div class="a" style="left:43px;top:1034px;width:19px;height:18px;background:#d3dfe2;border:1px solid #bccbcf;box-sizing:border-box;"></div>
<svg class="a" style="left:0;top:0;pointer-events:none" width="1918" height="1142"><path d="M55.0 1038.0 L55.0 1048.0 L50.0 1043.0 Z" fill="#3a3a3a"/></svg>
<div class="a" style="left:229px;top:1034px;width:19px;height:18px;background:#d3dfe2;border:1px solid #bccbcf;box-sizing:border-box;"></div>
<svg class="a" style="left:0;top:0;pointer-events:none" width="1918" height="1142"><path d="M236.0 1038.0 L236.0 1048.0 L241.0 1043.0 Z" fill="#3a3a3a"/></svg>
<div class="a" style="left:249px;top:1032px;width:21px;height:21px;background:#f7f7f7;"></div>
<div class="a" style="left:271px;top:380px;width:5px;height:674px;background:#d4d4d4;"></div>
<div class="a" style="left:273px;top:709.0px;width:2px;height:1.2px;background:#444;"></div>
<div class="a" style="left:273px;top:711.3px;width:2px;height:1.2px;background:#444;"></div>
<div class="a" style="left:273px;top:713.6px;width:2px;height:1.2px;background:#444;"></div>
<div class="a" style="left:273px;top:715.9px;width:2px;height:1.2px;background:#444;"></div>
<div class="a" style="left:273px;top:718.2px;width:2px;height:1.2px;background:#444;"></div>
<div class="a" style="left:273px;top:720.5px;width:2px;height:1.2px;background:#444;"></div>
<div class="a" style="left:273px;top:722.8px;width:2px;height:1.2px;background:#444;"></div>
<div class="a" style="left:276px;top:380px;width:1582px;height:674px;background:#ffffff;border:1px solid #2f6474;border-right:none;box-sizing:border-box;"></div>
<div class="a" style="left:1857px;top:380px;width:1px;height:674px;background:#ffffff;"></div>
<div class="a" style="left:288px;top:407px;width:1px;height:15px;background:#87a3ac;"></div>
<div class="a" style="left:1835px;top:407px;width:1px;height:15px;background:#87a3ac;"></div>
<div class="a" style="left:288px;top:421px;width:1548px;height:1px;background:#87a3ac;"></div>
<div class="a t" style="left:1013.25px;top:401.00px;font-size:13px;line-height:13px;color:#333;letter-spacing:0.070px;font-weight:bold;">november 2025</div>
<div class="a" style="left:288px;top:437px;width:1px;height:15px;background:#87a3ac;"></div>
<div class="a" style="left:365px;top:437px;width:1px;height:15px;background:#87a3ac;"></div>
<div class="a" style="left:443px;top:437px;width:1px;height:15px;background:#87a3ac;"></div>
<div class="a" style="left:521px;top:437px;width:1px;height:15px;background:#87a3ac;"></div>
<div class="a" style="left:599px;top:437px;width:1px;height:15px;background:#87a3ac;"></div>
<div class="a" style="left:677px;top:437px;width:1px;height:15px;background:#87a3ac;"></div>
<div class="a" style="left:755px;top:437px;width:1px;height:15px;background:#87a3ac;"></div>
<div class="a" style="left:833px;top:437px;width:1px;height:15px;background:#87a3ac;"></div>
<div class="a" style="left:911px;top:437px;width:1px;height:15px;background:#87a3ac;"></div>
<div class="a" style="left:988px;top:437px;width:1px;height:15px;background:#87a3ac;"></div>
<div class="a" style="left:1065px;top:437px;width:1px;height:15px;background:#87a3ac;"></div>
<div class="a" style="left:1142px;top:437px;width:1px;height:15px;background:#87a3ac;"></div>
<div class="a" style="left:1219px;top:437px;width:1px;height:15px;background:#87a3ac;"></div>
<div class="a" style="left:1296px;top:437px;width:1px;height:15px;background:#87a3ac;"></div>
<div class="a" style="left:1373px;top:437px;width:1px;height:15px;background:#87a3ac;"></div>
<div class="a" style="left:1450px;top:437px;width:1px;height:15px;background:#87a3ac;"></div>
<div class="a" style="left:1527px;top:437px;width:1px;height:15px;background:#87a3ac;"></div>
<div class="a" style="left:1604px;top:437px;width:1px;height:15px;background:#87a3ac;"></div>
<div class="a" style="left:1681px;top:437px;width:1px;height:15px;background:#87a3ac;"></div>
<div class="a" style="left:1758px;top:437px;width:1px;height:15px;background:#87a3ac;"></div>
<div class="a" style="left:1835px;top:437px;width:1px;height:15px;background:#87a3ac;"></div>
<div class="a" style="left:288px;top:451px;width:1548px;height:1px;background:#87a3ac;"></div>
<div class="a t" style="left:305.82px;top:432.00px;font-size:12.7px;line-height:12.7px;color:#333;">man., 3</div>
<div class="a t" style="left:372.15px;top:432.00px;font-size:12.7px;line-height:12.7px;color:#333;">tirs., 4. nov.</div>
<div class="a t" style="left:463.44px;top:432.00px;font-size:12.7px;line-height:12.7px;color:#333;">ons., 5</div>
<div class="a t" style="left:541.09px;top:432.00px;font-size:12.7px;line-height:12.7px;color:#333;">tors., 6</div>
<div class="a t" style="left:607.21px;top:432.00px;font-size:12.7px;line-height:12.7px;color:#333;">fre., 7. nov.</div>
<div class="a t" style="left:691.79px;top:432.00px;font-size:12.7px;line-height:12.7px;color:#333;">man., 10</div>
<div class="a t" style="left:774.15px;top:432.00px;font-size:12.7px;line-height:12.7px;color:#333;">tirs., 11</div>
<div class="a t" style="left:849.91px;top:432.00px;font-size:12.7px;line-height:12.7px;color:#333;">ons., 12</div>
<div class="a t" style="left:927.06px;top:432.00px;font-size:12.7px;line-height:12.7px;color:#333;">tors., 13</div>
<div class="a t" style="left:1007.23px;top:432.00px;font-size:12.7px;line-height:12.7px;color:#333;">fre., 14</div>
<div class="a t" style="left:1079.29px;top:432.00px;font-size:12.7px;line-height:12.7px;color:#333;">man., 17</div>
<div class="a t" style="left:1160.18px;top:432.00px;font-size:12.7px;line-height:12.7px;color:#333;">tirs., 18</div>
<div class="a t" style="left:1235.41px;top:432.00px;font-size:12.7px;line-height:12.7px;color:#333;">ons., 19</div>
<div class="a t" style="left:1312.06px;top:432.00px;font-size:12.7px;line-height:12.7px;color:#333;">tors., 20</div>
<div class="a t" style="left:1392.23px;top:432.00px;font-size:12.7px;line-height:12.7px;color:#333;">fre., 21</div>
<div class="a t" style="left:1464.29px;top:432.00px;font-size:12.7px;line-height:12.7px;color:#333;">man., 24</div>
<div class="a t" style="left:1545.18px;top:432.00px;font-size:12.7px;line-height:12.7px;color:#333;">tirs., 25</div>
<div class="a t" style="left:1620.41px;top:432.00px;font-size:12.7px;line-height:12.7px;color:#333;">ons., 26</div>
<div class="a t" style="left:1697.06px;top:432.00px;font-size:12.7px;line-height:12.7px;color:#333;">tors., 27</div>
<div class="a t" style="left:1777.23px;top:432.00px;font-size:12.7px;line-height:12.7px;color:#333;">fre., 28</div>
<div class="a" style="left:288px;top:452px;width:1548px;height:580px;overflow:hidden;background:#fff">
<div class="a" style="left:1px;top:0;width:7px;height:580px;background:#ececec"></div>
<div class="a" style="left:60px;top:0;width:17px;height:580px;background:#ececec"></div>
<div class="a" style="left:78px;top:0;width:7px;height:580px;background:#ececec"></div>
<div class="a" style="left:138px;top:0;width:17px;height:580px;background:#ececec"></div>
<div class="a" style="left:156px;top:0;width:7px;height:580px;background:#ececec"></div>
<div class="a" style="left:216px;top:0;width:17px;height:580px;background:#ececec"></div>
<div class="a" style="left:234px;top:0;width:7px;height:580px;background:#ececec"></div>
<div class="a" style="left:294px;top:0;width:17px;height:580px;background:#ececec"></div>
<div class="a" style="left:312px;top:0;width:7px;height:580px;background:#ececec"></div>
<div class="a" style="left:372px;top:0;width:17px;height:580px;background:#ececec"></div>
<div class="a" style="left:390px;top:0;width:7px;height:580px;background:#ececec"></div>
<div class="a" style="left:450px;top:0;width:17px;height:580px;background:#ececec"></div>
<div class="a" style="left:468px;top:0;width:7px;height:580px;background:#ececec"></div>
<div class="a" style="left:528px;top:0;width:17px;height:580px;background:#ececec"></div>
<div class="a" style="left:546px;top:0;width:7px;height:580px;background:#ececec"></div>
<div class="a" style="left:606px;top:0;width:17px;height:580px;background:#ececec"></div>
<div class="a" style="left:624px;top:0;width:7px;height:580px;background:#ececec"></div>
<div class="a" style="left:683px;top:0;width:17px;height:580px;background:#ececec"></div>
<div class="a" style="left:701px;top:0;width:7px;height:580px;background:#ececec"></div>
<div class="a" style="left:760px;top:0;width:17px;height:580px;background:#ececec"></div>
<div class="a" style="left:778px;top:0;width:7px;height:580px;background:#ececec"></div>
<div class="a" style="left:837px;top:0;width:17px;height:580px;background:#ececec"></div>
<div class="a" style="left:855px;top:0;width:7px;height:580px;background:#ececec"></div>
<div class="a" style="left:914px;top:0;width:17px;height:580px;background:#ececec"></div>
<div class="a" style="left:932px;top:0;width:7px;height:580px;background:#ececec"></div>
<div class="a" style="left:991px;top:0;width:17px;height:580px;background:#ececec"></div>
<div class="a" style="left:1009px;top:0;width:7px;height:580px;background:#ececec"></div>
<div class="a" style="left:1068px;top:0;width:17px;height:580px;background:#ececec"></div>
<div class="a" style="left:1086px;top:0;width:7px;height:580px;background:#ececec"></div>
<div class="a" style="left:1145px;top:0;width:17px;height:580px;background:#ececec"></div>
<div class="a" style="left:1163px;top:0;width:7px;height:580px;background:#ececec"></div>
<div class="a" style="left:1222px;top:0;width:17px;height:580px;background:#ececec"></div>
<div class="a" style="left:1240px;top:0;width:7px;height:580px;background:#ececec"></div>
<div class="a" style="left:1299px;top:0;width:17px;height:580px;background:#ececec"></div>
<div class="a" style="left:1317px;top:0;width:7px;height:580px;background:#ececec"></div>
<div class="a" style="left:1376px;top:0;width:17px;height:580px;background:#ececec"></div>
<div class="a" style="left:1394px;top:0;width:7px;height:580px;background:#ececec"></div>
<div class="a" style="left:1453px;top:0;width:17px;height:580px;background:#ececec"></div>
<div class="a" style="left:1471px;top:0;width:7px;height:580px;background:#ececec"></div>
<div class="a" style="left:1530px;top:0;width:17px;height:580px;background:#ececec"></div>
<div class="a" style="left:0px;top:0;width:1px;height:580px;background:#87a3ac"></div>
<div class="a" style="left:77px;top:0;width:1px;height:580px;background:#87a3ac"></div>
<div class="a" style="left:155px;top:0;width:1px;height:580px;background:#87a3ac"></div>
<div class="a" style="left:233px;top:0;width:1px;height:580px;background:#87a3ac"></div>
<div class="a" style="left:311px;top:0;width:1px;height:580px;background:#87a3ac"></div>
<div class="a" style="left:389px;top:0;width:1px;height:580px;background:#87a3ac"></div>
<div class="a" style="left:467px;top:0;width:1px;height:580px;background:#87a3ac"></div>
<div class="a" style="left:545px;top:0;width:1px;height:580px;background:#87a3ac"></div>
<div class="a" style="left:623px;top:0;width:1px;height:580px;background:#87a3ac"></div>
<div class="a" style="left:700px;top:0;width:1px;height:580px;background:#87a3ac"></div>
<div class="a" style="left:777px;top:0;width:1px;height:580px;background:#87a3ac"></div>
<div class="a" style="left:854px;top:0;width:1px;height:580px;background:#87a3ac"></div>
<div class="a" style="left:931px;top:0;width:1px;height:580px;background:#87a3ac"></div>
<div class="a" style="left:1008px;top:0;width:1px;height:580px;background:#87a3ac"></div>
<div class="a" style="left:1085px;top:0;width:1px;height:580px;background:#87a3ac"></div>
<div class="a" style="left:1162px;top:0;width:1px;height:580px;background:#87a3ac"></div>
<div class="a" style="left:1239px;top:0;width:1px;height:580px;background:#87a3ac"></div>
<div class="a" style="left:1316px;top:0;width:1px;height:580px;background:#87a3ac"></div>
<div class="a" style="left:1393px;top:0;width:1px;height:580px;background:#87a3ac"></div>
<div class="a" style="left:1470px;top:0;width:1px;height:580px;background:#87a3ac"></div>
<div class="a" style="left:1547px;top:0;width:1px;height:580px;background:#87a3ac"></div>
<div class="a" style="left:0;top:0;width:1548px;height:25px;background:#add8e6"></div>
<div class="a" style="left:60px;top:0;width:25px;height:25px;background:#bdd6dd"></div>
<div class="a" style="left:138px;top:0;width:25px;height:25px;background:#bdd6dd"></div>
<div class="a" style="left:216px;top:0;width:25px;height:25px;background:#bdd6dd"></div>
<div class="a" style="left:294px;top:0;width:25px;height:25px;background:#bdd6dd"></div>
<div class="a" style="left:372px;top:0;width:25px;height:25px;background:#bdd6dd"></div>
<div class="a" style="left:450px;top:0;width:25px;height:25px;background:#bdd6dd"></div>
<div class="a" style="left:528px;top:0;width:25px;height:25px;background:#bdd6dd"></div>
<div class="a" style="left:606px;top:0;width:25px;height:25px;background:#bdd6dd"></div>
<div class="a" style="left:683px;top:0;width:25px;height:25px;background:#bdd6dd"></div>
<div class="a" style="left:760px;top:0;width:25px;height:25px;background:#bdd6dd"></div>
<div class="a" style="left:837px;top:0;width:25px;height:25px;background:#bdd6dd"></div>
<div class="a" style="left:914px;top:0;width:25px;height:25px;background:#bdd6dd"></div>
<div class="a" style="left:991px;top:0;width:25px;height:25px;background:#bdd6dd"></div>
<div class="a" style="left:1068px;top:0;width:25px;height:25px;background:#bdd6dd"></div>
<div class="a" style="left:1145px;top:0;width:25px;height:25px;background:#bdd6dd"></div>
<div class="a" style="left:1222px;top:0;width:25px;height:25px;background:#bdd6dd"></div>
<div class="a" style="left:1299px;top:0;width:25px;height:25px;background:#bdd6dd"></div>
<div class="a" style="left:1376px;top:0;width:25px;height:25px;background:#bdd6dd"></div>
<div class="a" style="left:1453px;top:0;width:25px;height:25px;background:#bdd6dd"></div>
<div class="a" style="left:1530px;top:0;width:17px;height:25px;background:#bdd6dd"></div>
<div class="a" style="left:1px;top:0;width:7px;height:25px;background:#bdd6dd"></div>
<div class="a" style="left:785px;top:0;width:52px;height:25px;background:#bfe0ef"></div>
<div class="a" style="left:777px;top:0;width:8px;height:25px;background:#c4dde6"></div>
<div class="a" style="left:837px;top:0;width:17px;height:25px;background:#c4dde6"></div>
<div class="a" style="left:2px;top:2px;width:30px;height:20px;border:1px solid #92c9dc;border-radius:0 10px 10px 0;background:rgba(190,226,236,0.35);box-sizing:border-box"></div>
<div class="a" style="left:1516px;top:2px;width:30px;height:20px;border:1px solid #92c9dc;border-radius:10px 0 0 10px;background:rgba(190,226,236,0.35);box-sizing:border-box"></div>
<div class="a" style="left:0;top:49px;width:1548px;height:1px;background:#87a3ac"></div>
<div class="a" style="left:2px;top:27px;width:30px;height:20px;border:1px solid #b3d8f8;border-radius:0 10px 10px 0;background:rgba(236,246,255,0.55);box-sizing:border-box"></div>
<div class="a" style="left:1516px;top:27px;width:30px;height:20px;border:1px solid #b3d8f8;border-radius:10px 0 0 10px;background:rgba(236,246,255,0.55);box-sizing:border-box"></div>
<div class="a" style="left:0;top:89px;width:1548px;height:1px;background:#87a3ac"></div>
<div class="a" style="left:0;top:114px;width:1548px;height:1px;background:#87a3ac"></div>
<div class="a" style="left:2px;top:92px;width:30px;height:20px;border:1px solid #b3d8f8;border-radius:0 10px 10px 0;background:rgba(236,246,255,0.55);box-sizing:border-box"></div>
<div class="a" style="left:1516px;top:92px;width:30px;height:20px;border:1px solid #b3d8f8;border-radius:10px 0 0 10px;background:rgba(236,246,255,0.55);box-sizing:border-box"></div>
<div class="a" style="left:0;top:139px;width:1548px;height:1px;background:#87a3ac"></div>
<div class="a" style="left:2px;top:117px;width:30px;height:20px;border:1px solid #b3d8f8;border-radius:0 10px 10px 0;background:rgba(236,246,255,0.55);box-sizing:border-box"></div>
<div class="a" style="left:1516px;top:117px;width:30px;height:20px;border:1px solid #b3d8f8;border-radius:10px 0 0 10px;background:rgba(236,246,255,0.55);box-sizing:border-box"></div>
<div class="a" style="left:0;top:179px;width:1548px;height:1px;background:#87a3ac"></div>
<div class="a" style="left:0;top:204px;width:1548px;height:1px;background:#87a3ac"></div>
<div class="a" style="left:2px;top:182px;width:30px;height:20px;border:1px solid #b3d8f8;border-radius:0 10px 10px 0;background:rgba(236,246,255,0.55);box-sizing:border-box"></div>
<div class="a" style="left:1516px;top:182px;width:30px;height:20px;border:1px solid #b3d8f8;border-radius:10px 0 0 10px;background:rgba(236,246,255,0.55);box-sizing:border-box"></div>
<div class="a" style="left:0;top:229px;width:1548px;height:1px;background:#87a3ac"></div>
<div class="a" style="left:2px;top:207px;width:30px;height:20px;border:1px solid #b3d8f8;border-radius:0 10px 10px 0;background:rgba(236,246,255,0.55);box-sizing:border-box"></div>
<div class="a" style="left:1516px;top:207px;width:30px;height:20px;border:1px solid #b3d8f8;border-radius:10px 0 0 10px;background:rgba(236,246,255,0.55);box-sizing:border-box"></div>
<div class="a" style="left:0;top:269px;width:1548px;height:1px;background:#87a3ac"></div>
<div class="a" style="left:0;top:294px;width:1548px;height:1px;background:#87a3ac"></div>
<div class="a" style="left:2px;top:272px;width:30px;height:20px;border:1px solid #b3d8f8;border-radius:0 10px 10px 0;background:rgba(236,246,255,0.55);box-sizing:border-box"></div>
<div class="a" style="left:1516px;top:272px;width:30px;height:20px;border:1px solid #b3d8f8;border-radius:10px 0 0 10px;background:rgba(236,246,255,0.55);box-sizing:border-box"></div>
<div class="a" style="left:0;top:319px;width:1548px;height:1px;background:#87a3ac"></div>
<div class="a" style="left:2px;top:297px;width:30px;height:20px;border:1px solid #b3d8f8;border-radius:0 10px 10px 0;background:rgba(236,246,255,0.55);box-sizing:border-box"></div>
<div class="a" style="left:1516px;top:297px;width:30px;height:20px;border:1px solid #b3d8f8;border-radius:10px 0 0 10px;background:rgba(236,246,255,0.55);box-sizing:border-box"></div>
<div class="a" style="left:0;top:344px;width:1548px;height:1px;background:#87a3ac"></div>
<div class="a" style="left:2px;top:322px;width:30px;height:20px;border:1px solid #b3d8f8;border-radius:0 10px 10px 0;background:rgba(236,246,255,0.55);box-sizing:border-box"></div>
<div class="a" style="left:1516px;top:322px;width:30px;height:20px;border:1px solid #b3d8f8;border-radius:10px 0 0 10px;background:rgba(236,246,255,0.55);box-sizing:border-box"></div>
<div class="a" style="left:0;top:369px;width:1548px;height:1px;background:#87a3ac"></div>
<div class="a" style="left:2px;top:347px;width:30px;height:20px;border:1px solid #b3d8f8;border-radius:0 10px 10px 0;background:rgba(236,246,255,0.55);box-sizing:border-box"></div>
<div class="a" style="left:1516px;top:347px;width:30px;height:20px;border:1px solid #b3d8f8;border-radius:10px 0 0 10px;background:rgba(236,246,255,0.55);box-sizing:border-box"></div>
<div class="a" style="left:0;top:394px;width:1548px;height:1px;background:#87a3ac"></div>
<div class="a" style="left:2px;top:372px;width:30px;height:20px;border:1px solid #b3d8f8;border-radius:0 10px 10px 0;background:rgba(236,246,255,0.55);box-sizing:border-box"></div>
<div class="a" style="left:1516px;top:372px;width:30px;height:20px;border:1px solid #b3d8f8;border-radius:10px 0 0 10px;background:rgba(236,246,255,0.55);box-sizing:border-box"></div>
<div class="a" style="left:0;top:419px;width:1548px;height:1px;background:#87a3ac"></div>
<div class="a" style="left:2px;top:397px;width:30px;height:20px;border:1px solid #b3d8f8;border-radius:0 10px 10px 0;background:rgba(236,246,255,0.55);box-sizing:border-box"></div>
<div class="a" style="left:1516px;top:397px;width:30px;height:20px;border:1px solid #b3d8f8;border-radius:10px 0 0 10px;background:rgba(236,246,255,0.55);box-sizing:border-box"></div>
<div class="a" style="left:0;top:444px;width:1548px;height:1px;background:#87a3ac"></div>
<div class="a" style="left:2px;top:422px;width:30px;height:20px;border:1px solid #b3d8f8;border-radius:0 10px 10px 0;background:rgba(236,246,255,0.55);box-sizing:border-box"></div>
<div class="a" style="left:1516px;top:422px;width:30px;height:20px;border:1px solid #b3d8f8;border-radius:10px 0 0 10px;background:rgba(236,246,255,0.55);box-sizing:border-box"></div>
<div class="a" style="left:0;top:469px;width:1548px;height:1px;background:#87a3ac"></div>
<div class="a" style="left:2px;top:447px;width:30px;height:20px;border:1px solid #b3d8f8;border-radius:0 10px 10px 0;background:rgba(236,246,255,0.55);box-sizing:border-box"></div>
<div class="a" style="left:1516px;top:447px;width:30px;height:20px;border:1px solid #b3d8f8;border-radius:10px 0 0 10px;background:rgba(236,246,255,0.55);box-sizing:border-box"></div>
<div class="a" style="left:0;top:509px;width:1548px;height:1px;background:#87a3ac"></div>
<div class="a" style="left:0;top:534px;width:1548px;height:1px;background:#87a3ac"></div>
<div class="a" style="left:2px;top:512px;width:30px;height:20px;border:1px solid #b3d8f8;border-radius:0 10px 10px 0;background:rgba(236,246,255,0.55);box-sizing:border-box"></div>
<div class="a" style="left:1516px;top:512px;width:30px;height:20px;border:1px solid #b3d8f8;border-radius:10px 0 0 10px;background:rgba(236,246,255,0.55);box-sizing:border-box"></div>
<div class="a" style="left:0;top:559px;width:1548px;height:1px;background:#87a3ac"></div>
<div class="a" style="left:2px;top:537px;width:30px;height:20px;border:1px solid #b3d8f8;border-radius:0 10px 10px 0;background:rgba(236,246,255,0.55);box-sizing:border-box"></div>
<div class="a" style="left:1516px;top:537px;width:30px;height:20px;border:1px solid #b3d8f8;border-radius:10px 0 0 10px;background:rgba(236,246,255,0.55);box-sizing:border-box"></div>
<div class="a" style="left:0;top:584px;width:1548px;height:1px;background:#87a3ac"></div>
<div class="a" style="left:2px;top:562px;width:30px;height:20px;border:1px solid #b3d8f8;border-radius:0 10px 10px 0;background:rgba(236,246,255,0.55);box-sizing:border-box"></div>
<div class="a" style="left:1516px;top:562px;width:30px;height:20px;border:1px solid #b3d8f8;border-radius:10px 0 0 10px;background:rgba(236,246,255,0.55);box-sizing:border-box"></div>
<div class="a t" style="left:390px;top:50px;width:850px;height:30px;background:#00bfff;overflow:hidden">
<div class="a" style="left:1px;top:1px;width:9px;height:28px;background:#fff"></div>
<div class="a t" style="left:13.00px;top:6.00px;font-size:13.5px;line-height:13.5px;color:#333;letter-spacing:0.304px;font-weight:bold;">Ferie, 10/11-24/11 - Godkendt Ferie</div>
</div>
<div class="a t" style="left:156px;top:140px;width:234px;height:30px;background:#ffff66;overflow:hidden">
<div class="a" style="left:1px;top:1px;width:9px;height:28px;background:#fff"></div>
<div class="a" style="left:0;top:0;width:229px;height:30px;overflow:hidden">
<div class="a t" style="left:13.00px;top:6.00px;font-size:13.5px;line-height:13.5px;color:#333;letter-spacing:0.342px;font-weight:bold;">Sygdom, 05/11-08/11 - Godkendt Sygdom</div>
</div>
</div>
<div class="a t" style="left:1px;top:230px;width:77px;height:30px;background:#ffff66;overflow:hidden">
<div class="a" style="left:1px;top:1px;width:9px;height:28px;background:#fff"></div>
<div class="a t" style="left:13.00px;top:6.00px;font-size:13.5px;line-height:13.5px;color:#333;letter-spacing:0.444px;font-weight:bold;">Sygdom,</div>
</div>
<div class="a t" style="left:312px;top:470px;width:1236px;height:30px;background:#00bfff;overflow:hidden">
<div class="a" style="left:1px;top:1px;width:9px;height:28px;background:#fff"></div>
<div class="a t" style="left:13.00px;top:6.00px;font-size:13.5px;line-height:13.5px;color:#333;letter-spacing:0.318px;font-weight:bold;">Ferie, 07/11-30/11 - Godkendt Sommerferie</div>
</div>
</div>
<div class="a" style="left:1838px;top:452px;width:19px;height:580px;background:#f7f7f7;"></div>
<div class="a" style="left:1838px;top:453px;width:19px;height:19px;background:#adc9ce;border:1px solid #2f6474;box-sizing:border-box;"></div>
<svg class="a" style="left:0;top:0;pointer-events:none" width="1918" height="1142"><path d="M1842.5 465.0 L1852.5 465.0 L1847.5 460.0 Z" fill="#3a3a3a"/></svg>
<div class="a" style="left:1838px;top:473px;width:19px;height:314px;background:#adc9ce;border:1px solid #2f6474;box-sizing:border-box;"></div>
<div class="a" style="left:1838px;top:882px;width:19px;height:19px;background:#adc9ce;border:1px solid #2f6474;box-sizing:border-box;"></div>
<svg class="a" style="left:0;top:0;pointer-events:none" width="1918" height="1142"><path d="M1842.5 889.0 L1852.5 889.0 L1847.5 894.0 Z" fill="#3a3a3a"/></svg>
<div class="a" style="left:1839px;top:903px;width:18px;height:150px;background:#f7f7f7;"></div>
<div class="a" style="left:1838px;top:902px;width:20px;height:1px;background:#2f6474;"></div>
<div class="a" style="left:1838px;top:902px;width:1px;height:151px;background:#2f6474;"></div>
<svg class="a" style="left:0;top:0" width="1918" height="1142"><path d="M1844 910 H1854" stroke="#b8b8b8" stroke-width="1.6"/><path d="M1844 916 L1854 916 L1849 911 Z" fill="#b8b8b8"/><path d="M1844 921 L1854 921 L1849 916 Z" fill="#b8b8b8"/></svg>
<svg class="a" style="left:0;top:0" width="1918" height="1142"><path d="M1844 941 L1854 941 L1849 936 Z" fill="#b8b8b8"/><path d="M1844 946 L1854 946 L1849 941 Z" fill="#b8b8b8"/></svg>
<svg class="a" style="left:0;top:0" width="1918" height="1142"><path d="M1844 968 L1854 968 L1849 963 Z" fill="#c0c0c0"/></svg>
<svg class="a" style="left:0;top:0" width="1918" height="1142"><path d="M1844 989 L1854 989 L1849 994 Z" fill="#3a3a3a"/></svg>
<svg class="a" style="left:0;top:0" width="1918" height="1142"><path d="M1844 1010 L1854 1010 L1849 1015 Z" fill="#3a3a3a"/><path d="M1844 1015 L1854 1015 L1849 1020 Z" fill="#3a3a3a"/></svg>
<svg class="a" style="left:0;top:0" width="1918" height="1142"><path d="M1844 1045 H1854" stroke="#3a3a3a" stroke-width="1.6"/><path d="M1844 1034 L1854 1034 L1849 1039 Z" fill="#3a3a3a"/><path d="M1844 1039 L1854 1039 L1849 1044 Z" fill="#3a3a3a"/></svg>
<div class="a" style="left:289px;top:1032px;width:1547px;height:21px;background:#f7f7f7;"></div>
<div class="a" style="left:289px;top:1034px;width:19px;height:18px;background:#adc9ce;border:1px solid #2f6474;box-sizing:border-box;"></div>
<svg class="a" style="left:0;top:0;pointer-events:none" width="1918" height="1142"><path d="M301.0 1038.0 L301.0 1048.0 L296.0 1043.0 Z" fill="#3a3a3a"/></svg>
<div class="a" style="left:937px;top:1033px;width:251px;height:19px;background:#adc9ce;border:1px solid #2f6474;box-sizing:border-box;"></div>
<div class="a" style="left:1817px;top:1034px;width:19px;height:18px;background:#adc9ce;border:1px solid #2f6474;box-sizing:border-box;"></div>
<svg class="a" style="left:0;top:0;pointer-events:none" width="1918" height="1142"><path d="M1824.0 1038.0 L1824.0 1048.0 L1829.0 1043.0 Z" fill="#3a3a3a"/></svg>
<div class="a" style="left:288px;top:451px;width:1px;height:602px;background:#2f6474;"></div>
<div class="a" style="left:276px;top:1053px;width:1582px;height:1px;background:#2f6474;"></div>
</body></html>
